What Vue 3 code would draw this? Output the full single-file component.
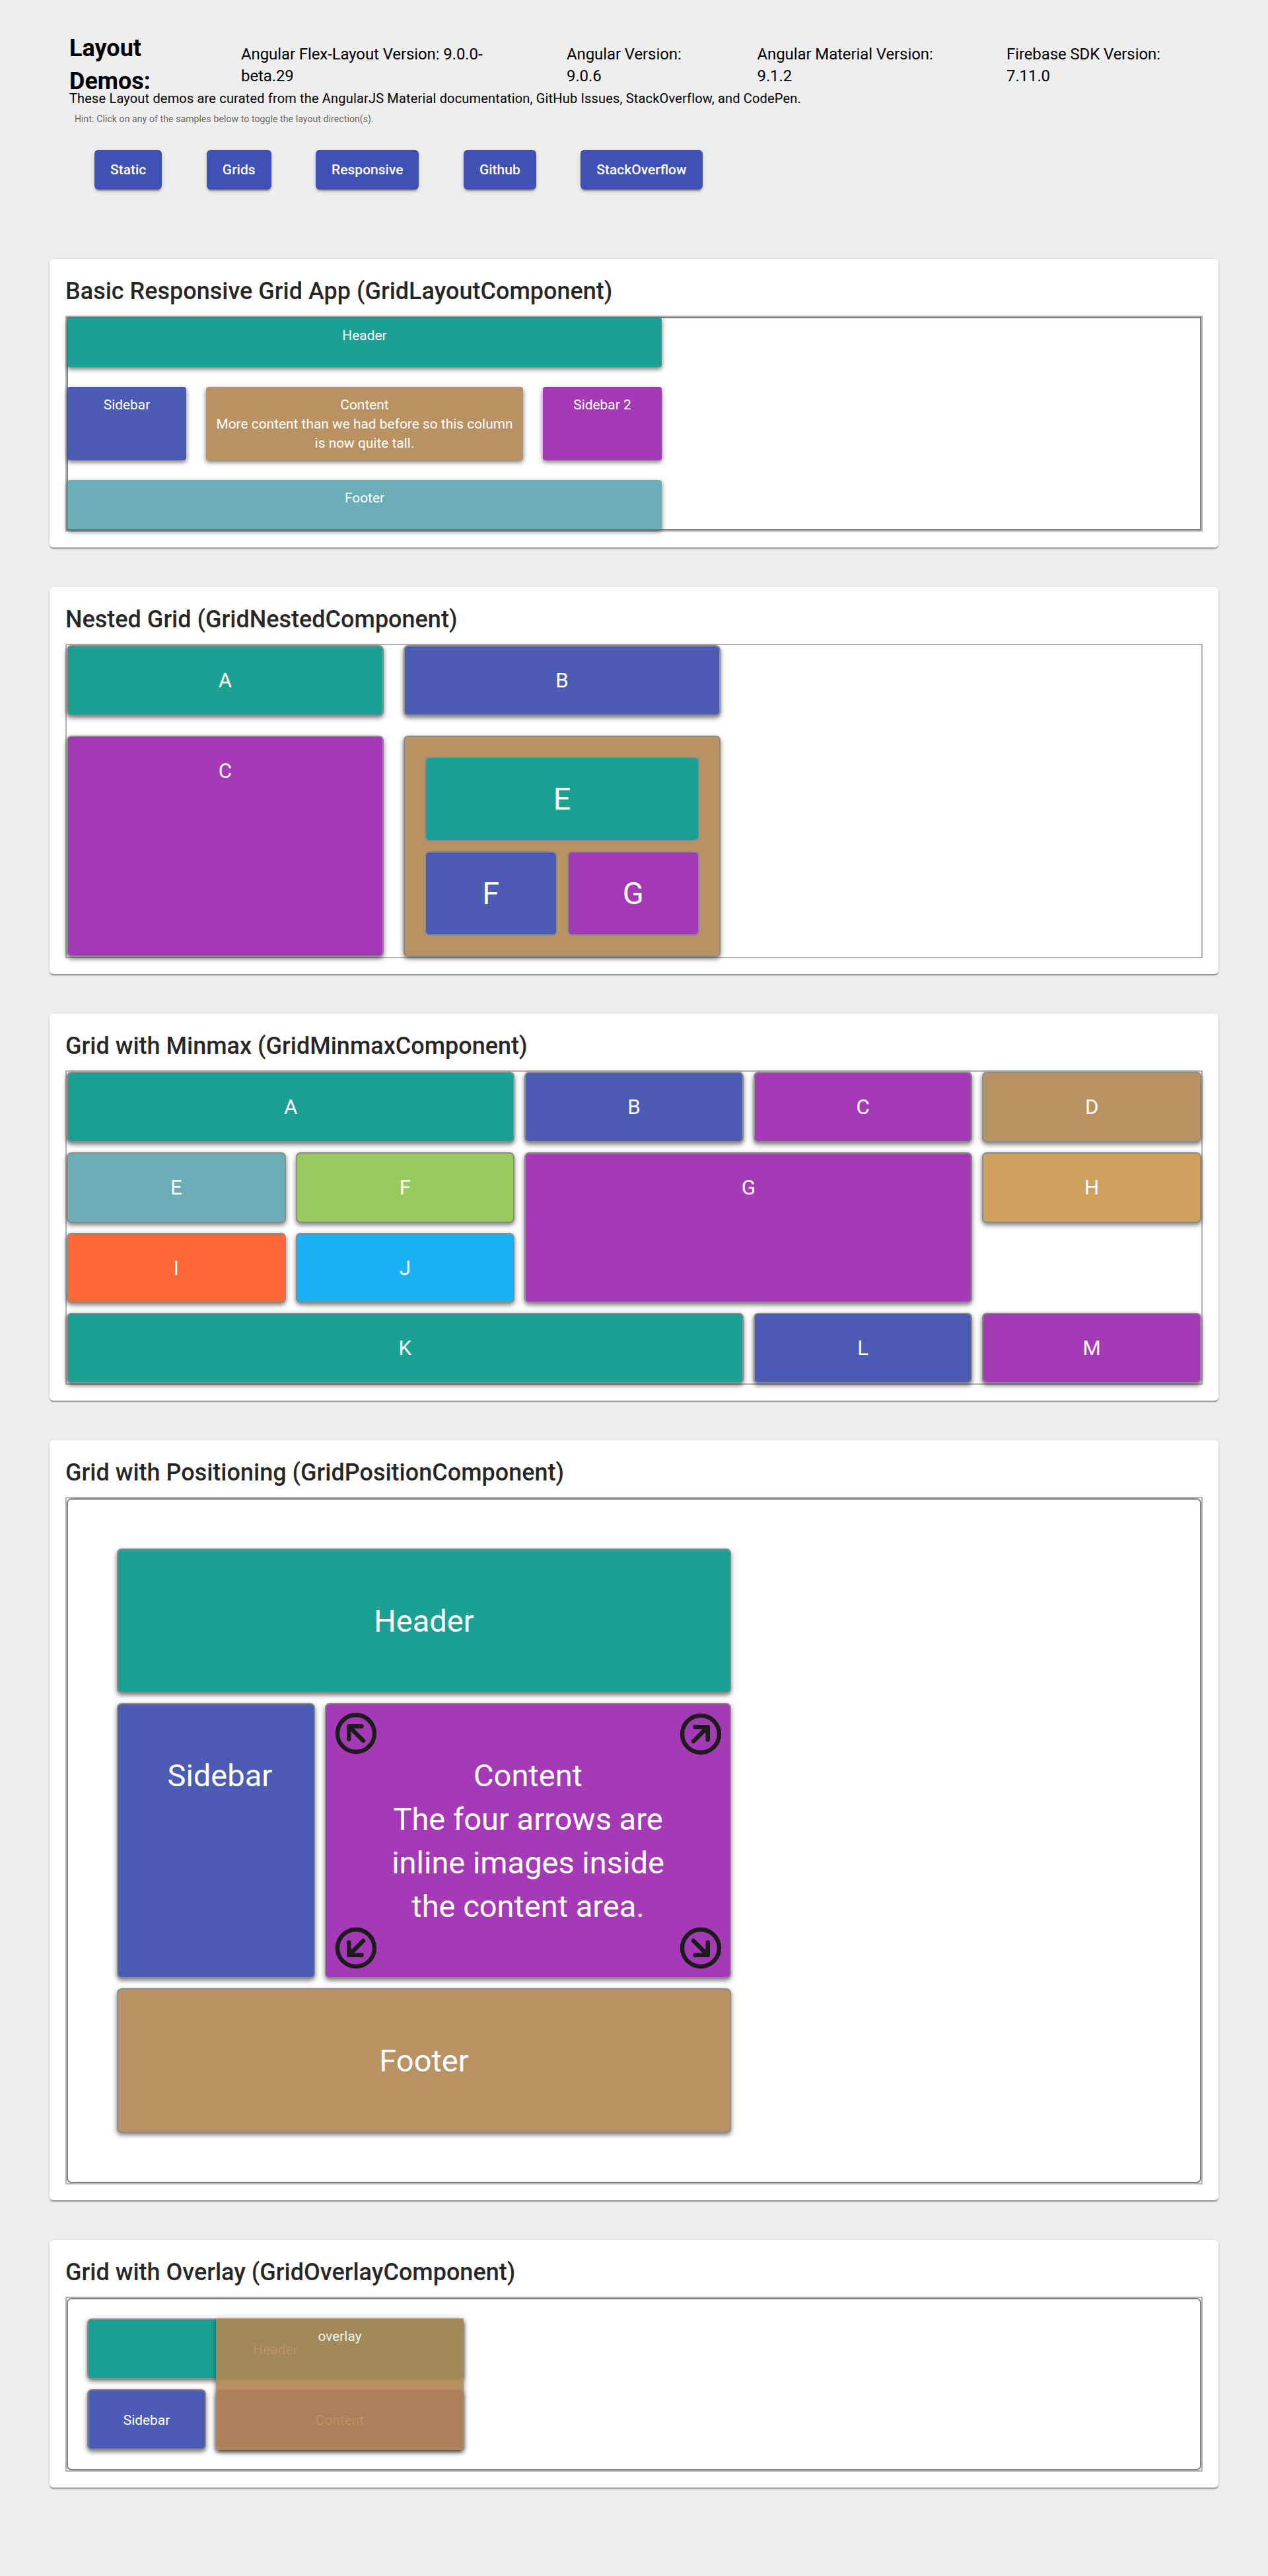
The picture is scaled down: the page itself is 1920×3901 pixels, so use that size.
<script setup>
const versions = [
  ['Angular Flex-Layout Version: 9.0.0-', 'beta.29'],
  ['Angular Version:', '9.0.6'],
  ['Angular Material Version:', '9.1.2'],
  ['Firebase SDK Version:', '7.11.0'],
]
const links = ['Static', 'Grids', 'Responsive', 'Github', 'StackOverflow']
const minmax = [
  { name: 'A', tone: 'teal', area: 'wide' },
  { name: 'B', tone: 'indigo' },
  { name: 'C', tone: 'purple' },
  { name: 'D', tone: 'brown' },
  { name: 'E', tone: 'mist' },
  { name: 'F', tone: 'green' },
  { name: 'G', tone: 'purple', area: 'block' },
  { name: 'H', tone: 'tan' },
  { name: 'I', tone: 'orange' },
  { name: 'J', tone: 'sky' },
  { name: 'K', tone: 'teal', area: 'row' },
  { name: 'L', tone: 'indigo' },
  { name: 'M', tone: 'purple' },
]
const arrows = ['nw', 'ne', 'sw', 'se']
</script>

<template>
  <div class="page">
    <header class="top">
      <div class="title-row">
        <h1>Layout<br />Demos:</h1>
        <div v-for="v in versions" :key="v[0]" class="version">{{ v[0] }}<br />{{ v[1] }}</div>
      </div>
      <p class="intro">These Layout demos are curated from the AngularJS Material documentation, GitHub Issues, StackOverflow, and CodePen.</p>
      <p class="hint">Hint: Click on any of the samples below to toggle the layout direction(s).</p>
      <nav class="links">
        <button v-for="l in links" :key="l">{{ l }}</button>
      </nav>
    </header>

    <main>
      <section class="card">
        <h2>Basic Responsive Grid App (GridLayoutComponent)</h2>
        <div class="frame">
          <div class="inner basic">
            <div class="item teal full">Header</div>
            <div class="item indigo">Sidebar</div>
            <div class="item brown">Content<br />More content than we had before so this column<br />is now quite tall.</div>
            <div class="item purple">Sidebar 2</div>
            <div class="item mist full">Footer</div>
          </div>
        </div>
      </section>

      <section class="card">
        <h2>Nested Grid (GridNestedComponent)</h2>
        <div class="frame nested">
          <div class="item box teal">A</div>
          <div class="item box indigo">B</div>
          <div class="item box purple">C</div>
          <div class="item box brown sub">
            <div class="cell teal full">E</div>
            <div class="cell indigo">F</div>
            <div class="cell purple">G</div>
          </div>
        </div>
      </section>

      <section class="card">
        <h2>Grid with Minmax (GridMinmaxComponent)</h2>
        <div class="frame minmax">
          <div v-for="m in minmax" :key="m.name" class="item box" :class="[m.tone, m.area]">{{ m.name }}</div>
        </div>
      </section>

      <section class="card">
        <h2>Grid with Positioning (GridPositionComponent)</h2>
        <div class="frame">
          <div class="inner round position">
            <div class="item big teal full">Header</div>
            <div class="item big indigo">Sidebar</div>
            <div class="item big purple">
              Content<br />The four arrows are<br />inline images inside<br />the content area.
              <svg v-for="a in arrows" :key="a" class="arrow" :class="a" viewBox="0 0 64 64">
                <circle cx="32" cy="32" r="28" />
                <path d="M40.5 21.3H21.3V40.5M21.3 21.3L43 43" />
                <path class="tip" d="M20 20H34L20 34Z" />
              </svg>
            </div>
            <div class="item big brown full">Footer</div>
          </div>
        </div>
      </section>

      <section class="card">
        <h2>Grid with Overlay (GridOverlayComponent)</h2>
        <div class="frame">
          <div class="inner round overlay">
            <div class="item small teal o-head">Header</div>
            <div class="item small indigo o-side">Sidebar</div>
            <div class="item small purple o-body">Content</div>
            <div class="item brown o-over">overlay</div>
          </div>
        </div>
      </section>
    </main>
  </div>
</template>

<style>
body {
  background: #eee;
}
</style>

<style scoped>
.page {
  box-sizing: border-box;
  width: 1920px;
  height: 3901px;
  background: #eee;
  font-family: Roboto, "Liberation Sans", sans-serif;
  color: rgba(0, 0, 0, 0.87);
}
.page * {
  box-sizing: border-box;
}
.top {
  height: 392px;
  padding: 48px 0 0 105px;
  color: #000;
}
.title-row {
  display: grid;
  grid-template-columns: 260px 493px 288.5px 377.5px auto;
  height: 86px;
}
h1 {
  margin: 0;
  font-size: 36px;
  line-height: 50px;
  font-weight: 700;
}
.version {
  padding-top: 18px;
  font-size: 24px;
  line-height: 33px;
  letter-spacing: -0.1px;
  white-space: nowrap;
}
.intro {
  margin: 0;
  font-size: 20px;
  line-height: 30px;
  letter-spacing: 0.17px;
}
.hint {
  margin: 6px 0 0 8px;
  font-size: 14px;
  line-height: 20px;
  letter-spacing: 0.1px;
  color: #666;
}
.links {
  display: flex;
  gap: 67.5px;
  margin: 37px 0 0 38px;
}
button {
  height: 60px;
  padding: 0 24px;
  border: 0;
  border-radius: 6px;
  background: #3f51b5;
  color: #fff;
  font: 500 21px/60px Roboto, sans-serif;
  box-shadow: 0 4.5px 1.5px -3px rgba(0, 0, 0, 0.2), 0 3px 3px rgba(0, 0, 0, 0.14), 0 1.5px 7.5px rgba(0, 0, 0, 0.12);
}
main {
  display: flex;
  flex-direction: column;
  gap: 60px;
  padding: 0 75px;
}
.card {
  padding: 24px;
  border-radius: 6px;
  background: #fff;
  box-shadow: 0 3px 1.5px -1.5px rgba(0, 0, 0, 0.2), 0 1.5px 1.5px rgba(0, 0, 0, 0.14), 0 1.5px 4.5px rgba(0, 0, 0, 0.12);
}
h2 {
  margin: 0 0 13px;
  padding-top: 1px;
  font-size: 36px;
  line-height: 48px;
  font-weight: 500;
  white-space: nowrap;
}
.frame {
  border: 2px solid #b2b2b2;
}
.inner {
  display: grid;
  box-shadow: inset 0 0 0 2px #808080;
}
.round {
  border-radius: 7px;
}
.item {
  padding: 12.6px 0 0;
  border-radius: 4px;
  opacity: 0.9;
  color: #fff;
  font-size: 20.9px;
  line-height: 29px;
  text-align: center;
  white-space: nowrap;
  box-shadow: 0 3px 7px rgba(0, 0, 0, 0.6);
}
.teal { background: #029788; }
.indigo { background: #394bad; }
.purple { background: #9b25af; }
.brown { background: #b18752; }
.mist { background: #5da5b0; }
.green { background: #8ec54d; }
.tan { background: #cb964e; }
.orange { background: #ff5722; }
.sky { background: #03a9f4; }
.full { grid-column: 1 / -1; }

.basic {
  grid-template-columns: 180px 480px 180px;
  grid-template-rows: 75px 111px 75px;
  gap: 30px;
  padding: 1px;
}
.box {
  padding: 30px 0 0;
  border: 2px solid #808080;
  border-radius: 7px;
  font-size: 31.3px;
  line-height: 43px;
}
.nested {
  display: grid;
  grid-template-columns: 480px 480px;
  grid-template-rows: 107px 335px;
  gap: 30px;
}
.sub {
  display: grid;
  grid-template-columns: 1fr 1fr;
  grid-template-rows: 1fr 1fr;
  gap: 15px;
  padding: 30px;
}
.cell {
  display: flex;
  align-items: center;
  justify-content: center;
  border: 2px solid #808080;
  border-radius: 7px;
  font-size: 47px;
  line-height: 66px;
}
.minmax {
  display: grid;
  grid-template-columns: repeat(5, 1fr);
  grid-template-rows: repeat(4, 106.75px);
  gap: 15px;
}
.wide { grid-column: span 2; }
.block { grid-column: span 2; grid-row: span 2; }
.row { grid-column: 1 / span 3; }

.position {
  grid-template-columns: 300px 615px;
  grid-template-rows: 219px 417px 219px;
  gap: 15px;
  padding: 76px;
}
.big {
  position: relative;
  padding: 75px 74.5px 0;
  border: 2px solid #808080;
  border-radius: 7px;
  font-size: 47px;
  line-height: 66px;
}
.arrow {
  position: absolute;
  left: 15px;
  top: 14px;
  width: 64px;
  height: 64px;
  margin: -2px;
  fill: none;
  stroke: #040404;
  stroke-width: 6.4;
  stroke-linecap: round;
  stroke-linejoin: round;
}
.tip { fill: #040404; stroke: none; }
.ne { left: auto; top: 15px; right: 14px; transform: scaleX(-1); }
.sw { top: auto; bottom: 14px; transform: scaleY(-1); }
.se { left: auto; top: auto; right: 14px; bottom: 14px; transform: scale(-1); }

.overlay {
  grid-template-columns: 180px 375px;
  grid-template-rows: 92px 92px;
  gap: 15px;
  padding: 31px;
}
.small {
  padding: 30.5px 0 0;
  border: 2px solid #808080;
  border-radius: 7px;
}
.o-head { grid-area: 1 / 1 / 2 / 3; }
.o-side { grid-area: 2 / 1; }
.o-body { grid-area: 2 / 2; }
.o-over { grid-area: 1 / 2 / 3 / 3; border-radius: 0; }
</style>
